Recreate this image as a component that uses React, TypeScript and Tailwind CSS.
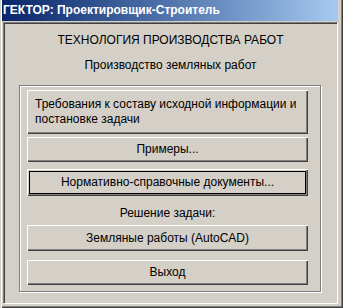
const BTN =
  'w-[281px] bg-[#d4d0c8] flex items-center justify-center shadow-[inset_1px_1px_0_#fff,inset_-1px_-1px_0_#404040,inset_-2px_-2px_0_#808080]';

export default function App() {
  return (
    <div className="w-[343px] h-[308px] bg-[#d4d0c8] flex flex-col pl-[3px] pr-[5px] pb-[4px] text-[12px] leading-[15px] text-black font-['Liberation_Sans',Arial,sans-serif] shadow-[inset_1px_0_0_#d4d0c8,inset_2px_0_0_#fff,inset_-1px_-1px_0_#404040,inset_-2px_-2px_0_#808080]">
      <div className="-ml-px h-[21px] shrink-0 flex items-center pl-[1px] bg-gradient-to-r from-[#0a246a] to-[#a6caf0] text-white font-bold">
        ГЕКТОР: Проектировщик-Строитель
      </div>

      <div className="mt-[1px] flex-1 flex flex-col border border-t-[#808080] border-l-[#808080] border-b-white border-r-white shadow-[inset_1px_1px_0_#404040]">
        <p className="mt-[10px] text-center">ТЕХНОЛОГИЯ ПРОИЗВОДСТВА РАБОТ</p>
        <p className="mt-[10px] text-center">Производство земляных работ</p>

        <div className="mt-[12px] ml-[15px] w-[302px] h-[207px] flex flex-col pl-[7px] pt-[4px] border border-[#808080] shadow-[inset_1px_1px_0_#fff,1px_1px_0_#fff]">
          <div className={BTN + ' h-[44px] !justify-start pl-[8px] text-left'}>
            <span>
              Требования к составу исходной информации и
              <br />
              постановке задачи
            </span>
          </div>
          <div className={BTN + ' h-[25px] mt-[3px]'}>Примеры...</div>
          <div className={BTN + ' h-[27px] mt-[7px] p-[2px]'}>
            <div className="w-full h-full border border-black flex items-center justify-center">
              Нормативно-справочные документы...
            </div>
          </div>
          <p className="mt-[10px] w-[281px] text-center">Решение задачи:</p>
          <div className={BTN + ' h-[26px] mt-[4px]'}>Земляные работы (AutoCAD)</div>
          <div className={BTN + ' h-[25px] mt-[9px]'}>Выход</div>
        </div>
      </div>
    </div>
  );
}
